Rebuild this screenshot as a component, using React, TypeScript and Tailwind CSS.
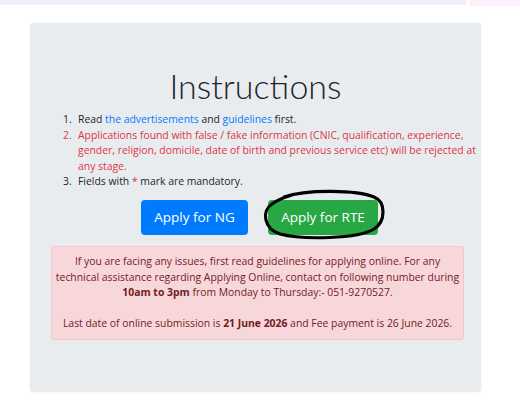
import React from "react";

export default function App() {
  const font = { fontFamily: '"Open Sans", "Noto Sans", sans-serif' };
  return (
    <div className="w-[520px] h-[407px] bg-white overflow-hidden relative" style={font}>
      <div className="flex h-[6px]">
        <div className="w-[466px] h-[5px] bg-[#f3edf9]" />
        <div className="w-[4px]" />
        <div className="flex-1 h-[6px] bg-[#fcf1fb]" />
      </div>
      <div className="ml-[30px] mt-[17px] w-[451px] h-[369px] bg-[#e9ecef] rounded-[3px] shadow-[0_0_3px_rgba(0,0,0,0.06)] pt-[42px]">
        <h1
          className="text-center text-[34px] leading-[42px] font-light text-[#212529]"
          style={{ fontFamily: 'Lato, "Open Sans", sans-serif' }}
        >
          Instructions
        </h1>
        <div className="mt-[5px] pl-[33px] text-[10.4px] leading-[15.6px] text-[#212529] whitespace-nowrap">
          <div className="flex">
            <span className="w-[15px]">1.</span>
            <span>
              Read <span className="text-[#007bff]">the advertisements</span> and{" "}
              <span className="text-[#007bff]">guidelines</span> first.
            </span>
          </div>
          <div className="flex text-[#dc3545]">
            <span className="w-[15px]">2.</span>
            <span>
              Applications found with false / fake information (CNIC, qualification, experience,
              <br />
              gender, religion, domicile, date of birth and previous service etc) will be rejected at
              <br />
              any stage.
            </span>
          </div>
          <div className="flex">
            <span className="w-[15px]">3.</span>
            <span>
              Fields with <span className="text-[#dc3545]">*</span> mark are mandatory.
            </span>
          </div>
        </div>
        <div className="mt-[10px] flex pl-[111px] gap-[20px]">
          <button className="w-[107px] h-[35px] rounded-[4px] bg-[#007bff] text-white text-[13.5px]">
            Apply for NG
          </button>
          <div className="relative">
            <button className="w-[110px] h-[35px] rounded-[4px] bg-[#28a745] text-white text-[13.5px]">
              Apply for RTE
            </button>
            <svg
              className="absolute left-[-6px] top-[-11px] pointer-events-none"
              width="125"
              height="52"
              viewBox="0 0 125 52"
            >
              <path
                d="M22 8 C45 0 95 1 112 8 C124 13 124 32 112 40 C96 50 40 51 18 45 C2 40 -1 22 10 15 C14 12 20 9 30 6"
                fill="none"
                stroke="#000"
                strokeWidth="3.2"
                strokeLinecap="round"
              />
            </svg>
          </div>
        </div>
        <div className="mt-[11px] ml-[21px] w-[413px] h-[94px] bg-[#f8d7da] border border-[#f5c6cb] rounded-[3px] text-[#721c24] text-center text-[10.4px] leading-[15.6px] pt-[7px] whitespace-nowrap">
          If you are facing any issues, first read guidelines for applying online. For any
          <br />
          technical assistance regarding Applying Online, contact on following number during
          <br />
          <b>10am to 3pm</b> from Monday to Thursday:- 051-9270527.
          <br />
          <br />
          Last date of online submission is <b>21 June 2026</b> and Fee payment is 26 June 2026.
        </div>
      </div>
    </div>
  );
}
